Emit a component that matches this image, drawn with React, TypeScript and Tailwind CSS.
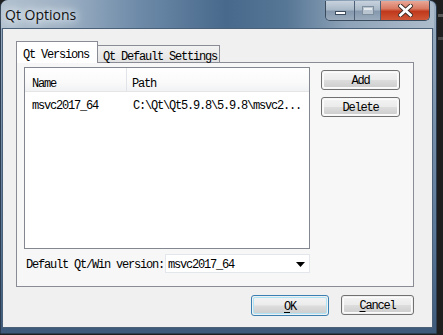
import React from 'react';

const MONO = "font-['Liberation_Mono',monospace] text-[12px] tracking-[-1.2px] text-black leading-none relative top-[1px]";

function WinButton({ label, mnemonic, primary, className }: { label: string; mnemonic?: boolean; primary?: boolean; className: string }) {
  return (
    <div
      className={`${className} rounded-[3px] border ${
        primary ? 'border-[#3c7fb1]' : 'border-[#707070]'
      } p-px`}
    >
      <div
        className={`w-full h-full rounded-[2px] border ${
          primary ? 'border-[#aee4f5]' : 'border-[#fbfbfb]'
        } bg-[linear-gradient(180deg,#f2f2f2_0%,#ebebeb_48%,#dddddd_52%,#cfcfcf_100%)] flex items-center justify-center`}
      >
        {mnemonic ? (
          <span className={MONO}>
            <span className="underline underline-offset-2">{label[0]}</span>
            {label.slice(1)}
          </span>
        ) : (
          <span className={MONO}>{label}</span>
        )}
      </div>
    </div>
  );
}

export default function App() {
  return (
    <div className="w-[443px] h-[335px] bg-[#1f1f1f] overflow-hidden relative">
      {/* desktop bits behind the window */}
      <div className="absolute right-0 top-[14px] w-[5px] h-[3px] bg-[#5a5a5a]" />
      <div className="absolute right-0 top-[37px] w-[5px] h-[3px] bg-[#4a4a4a]" />

      {/* window */}
      <div className="w-[437px] h-[334px] rounded-t-[7px] border border-[#2d3e52] bg-[linear-gradient(180deg,#9cafc2_0%,#7d95ae_30%,#5b7898_70%,#3d5a7b_100%)] flex flex-col pl-px pr-[3px] pb-[5px] relative">
        {/* title bar */}
        <div className="h-[28px] -mx-px -mt-px rounded-t-[7px] bg-[linear-gradient(90deg,#b3c1cf_0%,#9eb1c4_14%,#6d8aa8_32%,#48698c_52%,#577796_66%,#8ea3b8_80%,#aebdcc_100%)] flex justify-between items-start">
          <div className="pl-[4px] pt-[8px] font-['Open_Sans',sans-serif] text-[14px] leading-none text-[#111] [text-shadow:0_0_6px_#e8eef4,0_0_10px_#e8eef4,0_0_14px_#dfe7ef]">
            Qt Options
          </div>
          <div className="flex h-[20px] mr-[4px] mt-px rounded-b-[5px] border border-t-0 border-[#3a4b5e] overflow-hidden">
            <div className="w-[29px] h-full bg-[linear-gradient(180deg,#c7d2dd_0%,#aab9c8_45%,#8598ad_55%,#9aabbd_100%)] border-r border-[#4e6075] flex items-center justify-center">
              <div className="w-[11px] h-[4px] bg-white border border-[#3d4c5c] mt-[5px]" />
            </div>
            <div className="w-[26px] h-full bg-[linear-gradient(180deg,#c7d2dd_0%,#aab9c8_45%,#8598ad_55%,#9aabbd_100%)] border-r border-[#4e6075] flex items-center justify-center">
              <div className="w-[12px] h-[9px] border border-[#7f8e9d] bg-[#b8c4d0] flex items-center justify-center">
                <div className="w-[8px] h-[5px] border-t-2 border-[#e4e9ee]" />
              </div>
            </div>
            <div className="w-[48px] h-full bg-[linear-gradient(180deg,#e9a797_0%,#d97a63_40%,#c1391c_55%,#cf5637_100%)] flex items-center justify-center">
              <svg width="15" height="13" viewBox="0 0 15 13">
                <path d="M2.5 2 L12.5 11 M12.5 2 L2.5 11" stroke="#3c2a24" strokeWidth="4.6" strokeLinecap="square" />
                <path d="M2.5 2 L12.5 11 M12.5 2 L2.5 11" stroke="#ffffff" strokeWidth="2.8" strokeLinecap="square" />
              </svg>
            </div>
          </div>
        </div>

        {/* client area */}
        <div className="flex-1 border border-[#4b6079] bg-[#f0f0f0] flex flex-col pl-[13px]">
          {/* tab bar */}
          <div className="flex items-end mt-[12px]">
            <div className="h-[22px] -mb-px relative z-10 w-[82px] border border-b-0 border-[#898c95] bg-white pl-[6px] pt-[6px]">
              <div className={MONO}>Qt Versions</div>
            </div>
            <div className="h-[17px] w-[123px] -ml-px border border-b-0 border-[#898c95] bg-[linear-gradient(180deg,#f2f2f2_0%,#e3e3e3_100%)] pl-[5px] pt-[4px]">
              <div className={MONO}>Qt Default Settings</div>
            </div>
          </div>

          {/* tab pane */}
          <div className="w-[398px] h-[225px] border border-[#898c95] bg-[#f7f7f7] flex">
            <div className="flex flex-col ml-[7px] mt-[4px]">
              {/* tree view */}
              <div className="w-[286px] h-[182px] border border-[#828790] bg-white flex flex-col">
                <div className="h-[24px] flex border-b border-[#e5e5e5] bg-[linear-gradient(180deg,#ffffff_0%,#fafafa_60%,#f1f2f4_100%)]">
                  <div className="w-[102px] border-r border-[#e0e3e7] pl-[7px] pt-[9px]">
                    <div className={MONO}>Name</div>
                  </div>
                  <div className="pl-[5px] pt-[9px]">
                    <div className={MONO}>Path</div>
                  </div>
                </div>
                <div className="h-[26px] flex items-center">
                  <div className="w-[102px] pl-[7px]">
                    <div className={MONO}>msvc2017_64</div>
                  </div>
                  <div className="pl-[6px]">
                    <div className={MONO}>C:\Qt\Qt5.9.8\5.9.8\msvc2...</div>
                  </div>
                </div>
              </div>

              {/* default version row */}
              <div className="flex items-center mt-[5px] ml-[2px]">
                <div className={`w-[139px] ${MONO}`}>Default Qt/Win version:</div>
                <div className="w-[145px] h-[19px] border border-[#e3e6ea] bg-white flex items-center justify-between pl-[2px] pr-[4px]">
                  <span className={MONO}>msvc2017_64</span>
                  <svg width="9" height="5" viewBox="0 0 9 5" className="mt-[2px]">
                    <path d="M0 0 H9 L4.5 5 Z" fill="#000" />
                  </svg>
                </div>
              </div>
            </div>

            {/* side buttons */}
            <div className="flex flex-col gap-[7px] ml-[11px] mt-[7px]">
              <WinButton label="Add" className="w-[79px] h-[20px]" />
              <WinButton label="Delete" className="w-[79px] h-[20px]" />
            </div>
          </div>

          {/* dialog buttons */}
          <div className="w-[398px] flex justify-end items-start gap-[12px] mt-[8px]">
            <WinButton label="OK" mnemonic primary className="w-[78px] h-[21px]" />
            <WinButton label="Cancel" mnemonic className="w-[73px] h-[20px]" />
          </div>
        </div>
      </div>
    </div>
  );
}
